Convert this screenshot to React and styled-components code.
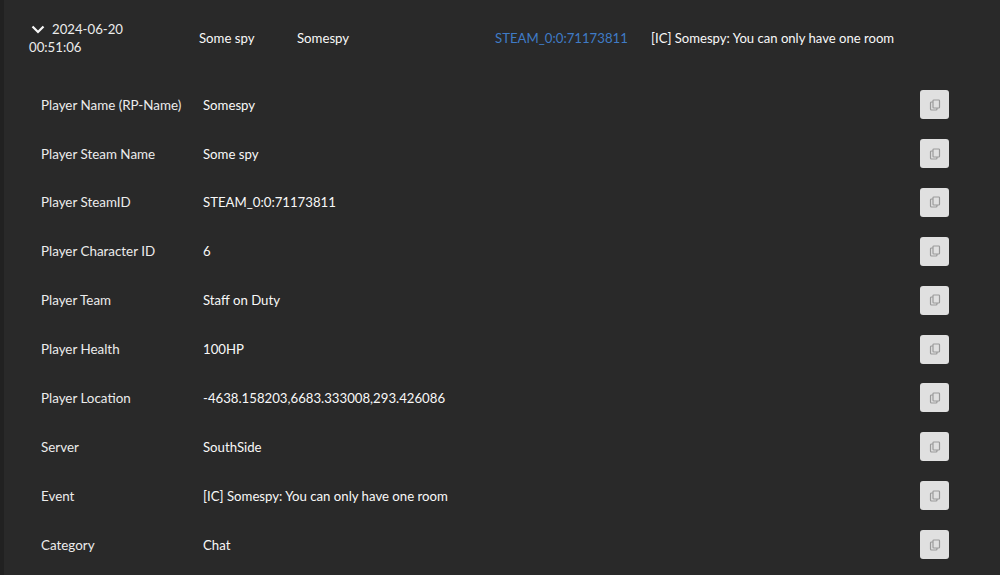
import styled, { createGlobalStyle } from 'styled-components';

const GlobalStyle = createGlobalStyle`
  html, body {
    margin: 0;
    height: 100%;
    background: #292929;
    overflow: hidden;
  }
`;

const Page = styled.div`
  height: 575px;
  box-sizing: border-box;
  border-left: 4px solid #212121;
  background: #292929;
  color: #f8f8f8;
  font-family: Lato, "Liberation Sans", sans-serif;
  font-size: 13.2px;
  line-height: 18px;
  overflow: hidden;
`;

const LogRow = styled.div`
  display: grid;
  grid-template-columns: 170px 98px 198px 156px 1fr;
  align-items: center;
  padding: 20px 0 0 25px;
`;

const DateCell = styled.div`
  color: #ececec;
`;

const Chevron = styled.svg`
  width: 14px;
  height: 14px;
  margin: 0 7px 0 2px;
  vertical-align: -2px;
`;

const SteamLink = styled.a`
  color: #3f7bc6;
  text-decoration: none;
`;

const EventText = styled.div`
  font-size: 13.1px;
`;

const Details = styled.div`
  margin-top: 24.2px;
  padding: 0 51px 0 37px;
`;

const DetailRow = styled.div`
  display: grid;
  grid-template-columns: 162px 1fr 29px;
  align-items: center;
  height: 48.9px;
`;

const DetailLabel = styled.div`
  color: #ececec;
  font-size: 13.4px;
`;

const CopyButton = styled.button`
  width: 29px;
  height: 29px;
  padding: 0;
  border: none;
  border-radius: 3px;
  background: #e0e0e0;
  color: #9a9a9a;
  display: flex;
  align-items: center;
  justify-content: center;
`;

const details = [
  ['Player Name (RP-Name)', 'Somespy'],
  ['Player Steam Name', 'Some spy'],
  ['Player SteamID', 'STEAM_0:0:71173811'],
  ['Player Character ID', '6'],
  ['Player Team', 'Staff on Duty'],
  ['Player Health', '100HP'],
  ['Player Location', '-4638.158203,6683.333008,293.426086'],
  ['Server', 'SouthSide'],
  ['Event', '[IC] Somespy: You can only have one room'],
  ['Category', 'Chat'],
];

const CopyIcon = () => (
  <svg width="12" height="12" viewBox="0 0 12 12" fill="none" stroke="currentColor" strokeWidth="1.2">
    <rect x="4" y="1" width="6.5" height="8" rx="0.8" fill="#e0e0e0" />
    <path d="M4 3H2.5a1 1 0 0 0-1 1v6a1 1 0 0 0 1 1h4.5a1 1 0 0 0 1-1V9" />
  </svg>
);

const App = () => (
  <Page>
    <GlobalStyle />
    <LogRow>
      <DateCell>
        <Chevron viewBox="0 0 14 14" fill="none" stroke="#f8f8f8" strokeWidth="2.2">
          <path d="M1.5 4.5l5.5 5.5 5.5-5.5" />
        </Chevron>
        2024-06-20
        <br />
        00:51:06
      </DateCell>
      <div>Some spy</div>
      <div>Somespy</div>
      <SteamLink>STEAM_0:0:71173811</SteamLink>
      <EventText>[IC] Somespy: You can only have one room</EventText>
    </LogRow>
    <Details>
      {details.map(([label, value]) => (
        <DetailRow key={label}>
          <DetailLabel>{label}</DetailLabel>
          <div>{value}</div>
          <CopyButton aria-label={`Copy ${label}`}>
            <CopyIcon />
          </CopyButton>
        </DetailRow>
      ))}
    </Details>
  </Page>
);

export default App;
